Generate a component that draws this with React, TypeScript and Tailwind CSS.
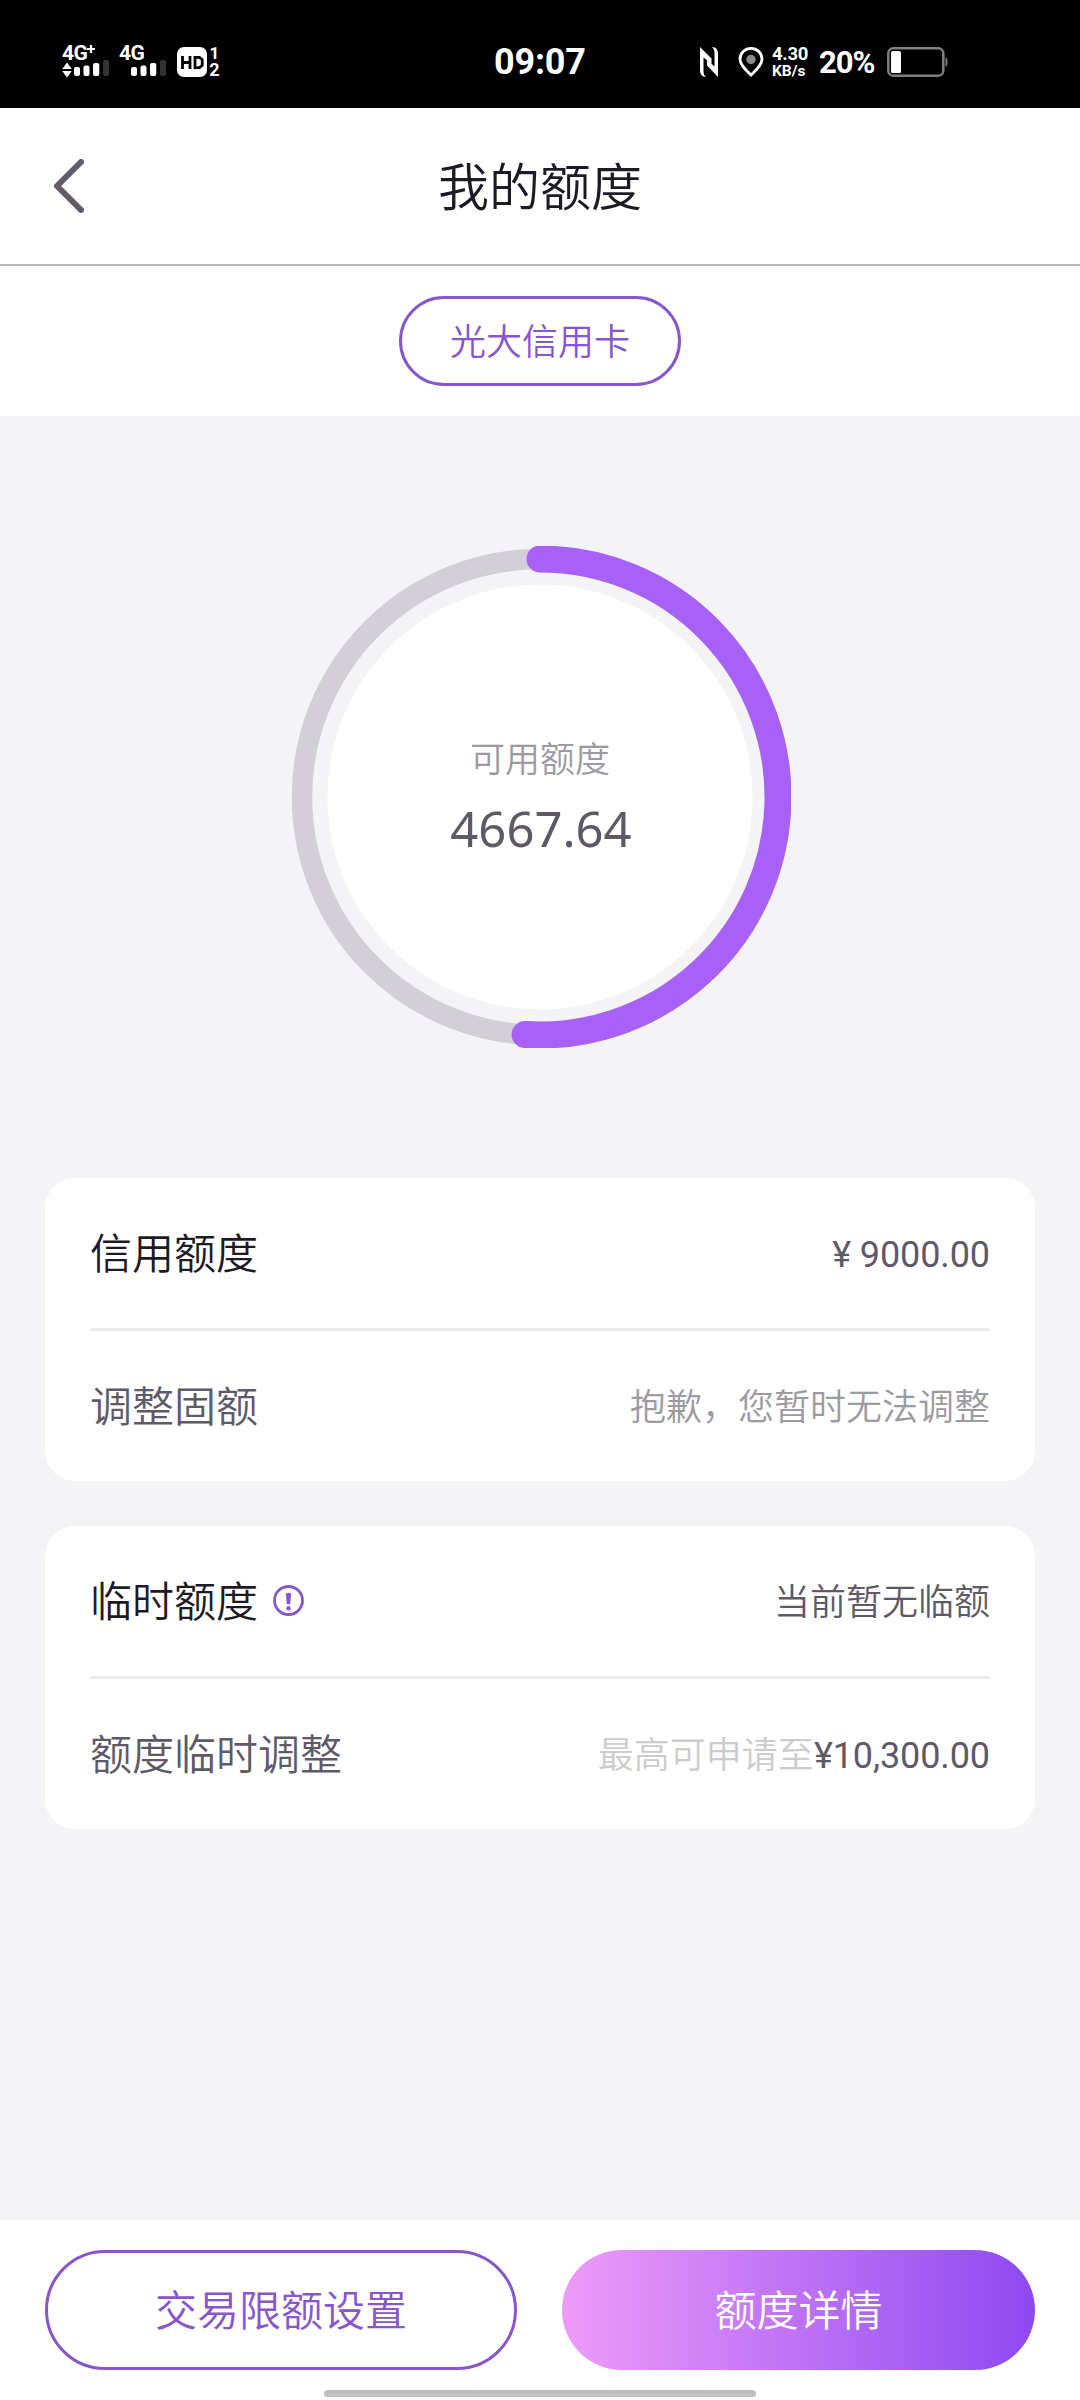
import React from 'react';

const RING = { size: 502, radius: 238, track: 20.5, stroke: 27, sweep: 183.6 };

function SignalBars() {
    return (
        <svg width="35" height="16" viewBox="0 0 35 16" fill="white" className="block">
            <rect x="0" y="7" width="6" height="9" rx="2" />
            <rect x="9.5" y="5.5" width="6" height="10.5" rx="2" />
            <rect x="19" y="3" width="6.3" height="13" rx="2" />
            <rect x="29" y="0" width="6" height="16" rx="2" fill="#333333" />
        </svg>
    );
}

function DataArrows() {
    return (
        <svg width="10" height="16" viewBox="0 0 10 16" fill="white" className="block">
            <path d="M5 0.5 L9.8 7 H0.2 Z" />
            <path d="M5 15.5 L9.8 9 H0.2 Z" />
        </svg>
    );
}

function StatusBar() {
    return (
        <div className="flex h-[108px] shrink-0 bg-black font-['Roboto',sans-serif] text-white">
            <div className="flex w-[494px] items-start pl-[62px] pt-[45px]">
                <div className="w-[57px]">
                    <div className="flex h-[15px] items-start text-[21px] leading-[16px] font-bold">
                        <span className="tracking-[-0.5px]">4G</span>
                        <svg width="8" height="8" viewBox="0 0 8 8" className="block" stroke="white" strokeWidth="2.2">
                            <path d="M4 0V8M0 4H8" />
                        </svg>
                    </div>
                    <div className="flex gap-[2px]">
                        <div className="pt-[2px]">
                            <DataArrows />
                        </div>
                        <SignalBars />
                    </div>
                </div>
                <div className="w-[58px]">
                    <div className="h-[15px] text-[21px] leading-[16px] font-bold tracking-[-0.5px]">4G</div>
                    <div className="pl-[12px]">
                        <SignalBars />
                    </div>
                </div>
                <div className="mt-[2px] flex h-[30px] w-[30px] items-center justify-center rounded-[7px] bg-white">
                    <svg width="23" height="13" viewBox="0 0 23 13" fill="none" stroke="black" strokeWidth="2.8">
                        <path d="M1.5 0V13M9 0V13M1.5 6.5H9M14 1.4H18.5L21.2 3.6V9.4L18.5 11.6H14Z" />
                    </svg>
                </div>
                <div className="mt-px ml-[2px] flex w-[11px] flex-col items-center text-[18px] leading-[14px] font-bold">
                    <span className="h-[17px] text-[17px]">1</span>
                    <span className="h-[14px]">2</span>
                </div>
            </div>
            <div className="w-[206px] pt-[44px] text-[36px] leading-[36px] font-bold tracking-[-0.2px]">09:07</div>
            <div className="flex items-start pt-[47px]">
                <svg width="18" height="30" viewBox="0 0 18 30" fill="white" className="block">
                    <path d="M0 0L11.5 11.5V17L3.5 10.5V25Q3.5 28 6 30Q0 30 0 23Z" />
                    <path d="M18 30L7 18.5V13L14.5 19.5V5Q14.5 2 12 0Q18 0 18 7Z" />
                </svg>
                <svg width="26" height="30" viewBox="0 0 26 30" fill="none" className="ml-[20px] block">
                    <path d="M13 28C8 23 2 18 2 12A11 10.6 0 0 1 24 12C24 18 18 23 13 28Z" stroke="white" strokeWidth="2.8" />
                    <circle cx="13" cy="12.5" r="4.7" fill="#8a8a8a" />
                </svg>
                <div className="ml-[8px] w-[47px] font-bold">
                    <div className="h-[17px] text-[18.5px] leading-[15px] tracking-[-0.3px]">4.30</div>
                    <div className="text-[15.5px] leading-[14px]">KB/s</div>
                </div>
                <div className="w-[68px] text-[31px] leading-[32px] font-bold tracking-[-1px]">20%</div>
                <svg width="61" height="30" viewBox="0 0 61 30" className="block">
                    <rect x="1.3" y="1.3" width="55" height="27.4" rx="5" fill="none" stroke="#808080" strokeWidth="2.5" />
                    <rect x="4" y="4" width="10" height="22" rx="1.5" fill="white" />
                    <path d="M58.5 10Q60.5 11 60.5 15Q60.5 19 58.5 20Z" fill="#808080" />
                </svg>
            </div>
        </div>
    );
}

function QuotaRing() {
    const center = RING.size / 2;
    const angle = (RING.sweep * Math.PI) / 180;
    const endX = center + RING.radius * Math.sin(angle);
    const endY = center - RING.radius * Math.cos(angle);

    return (
        <div className="relative mx-auto h-[502px] w-[502px]">
            <svg width={RING.size} height={RING.size} className="block overflow-hidden">
                <circle cx={center} cy={center} r={RING.radius} fill="none" stroke="#d2d0d6" strokeWidth={RING.track} />
                <circle cx={center} cy={center} r={212.5} fill="white" />
                <path
                    d={`M${center} ${center - RING.radius} A${RING.radius} ${RING.radius} 0 1 1 ${endX} ${endY}`}
                    fill="none"
                    stroke="#a761f6"
                    strokeWidth={RING.stroke}
                    strokeLinecap="round"
                />
            </svg>
            <div className="absolute inset-0 flex flex-col items-center pt-[188px]">
                <span className="font-['Noto_Sans_CJK_SC',sans-serif] text-[35px] leading-[46px] font-[350] text-[#9c9aa1]">可用额度</span>
                <span className="mt-[13px] pl-[2px] font-['Noto_Sans',sans-serif] text-[49px] leading-[70px] text-[#5f5967]">4667.64</span>
            </div>
        </div>
    );
}

function InfoIcon() {
    return (
        <svg width="31" height="31" viewBox="0 0 31 31" fill="none" className="block -translate-y-px">
            <circle cx="15.5" cy="15.5" r="14" stroke="#8855ce" strokeWidth="2.8" />
            <path d="M12.9 9.2Q12.9 7.7 15.5 7.7Q18.1 7.7 18.1 9.2L17.2 19.3H13.8Z" fill="#8855ce" />
            <circle cx="15.5" cy="23.3" r="2.2" fill="#8855ce" />
        </svg>
    );
}

function Row({ label, children }: { label: React.ReactNode; children: React.ReactNode }) {
    return (
        <div className="flex h-[150px] items-center justify-between">
            <div className="flex items-center gap-[15px] text-[42px] leading-[60px] font-[350]">{label}</div>
            <div className="pt-[3px] text-[36px] leading-[60px]">{children}</div>
        </div>
    );
}

export default function App() {
    return (
        <div
            lang="zh-CN"
            className="flex h-[2400px] w-[1080px] flex-col bg-[#f4f4f7] font-['Roboto','Noto_Sans_CJK_SC',sans-serif]"
        >
            <StatusBar />

            {/* Title bar */}
            <header className="flex h-[158px] shrink-0 items-center border-b-2 border-[#b9b9b9] bg-white">
                <div className="w-[200px] pl-[53px]">
                    <svg width="31" height="54" viewBox="0 0 31 54" fill="none" className="block">
                        <path d="M28 3L4 27L28 51" stroke="#625b69" strokeWidth="6" strokeLinecap="round" strokeLinejoin="round" />
                    </svg>
                </div>
                <h1 className="flex-1 pt-[6px] text-center text-[51px] leading-[72px] font-[350] text-[#1d1a26]">我的额度</h1>
                <div className="w-[200px]" />
            </header>

            {/* Card selector */}
            <div className="flex h-[150px] shrink-0 items-center justify-center bg-white">
                <button className="h-[90px] w-[282px] rounded-full border-3 border-[#8855ce] pt-[3px] text-[36px] leading-[60px] font-[350] text-[#8855ce]">
                    光大信用卡
                </button>
            </div>

            <main className="flex-1 px-[45px] pt-[130px]">
                <QuotaRing />

                <section className="mt-[130px] rounded-[30px] bg-white px-[45px]">
                    <Row label={<span className="pt-[3px] text-[#1d1a26]">信用额度</span>}>
                        <span className="tracking-[-0.1px] text-[#5f5967]">¥ 9000.00</span>
                    </Row>
                    <div className="h-[3px] bg-[#ececee]" />
                    <Row label={<span className="pt-[3px] text-[#5f5967]">调整固额</span>}>
                        <span className="font-[350] text-[#9c9aa1]">抱歉，您暂时无法调整</span>
                    </Row>
                </section>

                <section className="mt-[45px] rounded-[30px] bg-white px-[45px]">
                    <Row
                        label={
                            <>
                                <span className="pt-[3px] text-[#1d1a26]">临时额度</span>
                                <InfoIcon />
                            </>
                        }
                    >
                        <span className="font-[350] text-[#5f5967]">当前暂无临额</span>
                    </Row>
                    <div className="h-[3px] bg-[#ececee]" />
                    <Row label={<span className="pt-[3px] text-[#5f5967]">额度临时调整</span>}>
                        <span className="font-[350] text-[#cccccc]">最高可申请至</span>
                        <span className="tracking-[-0.1px] text-[#5f5967]">¥10,300.00</span>
                    </Row>
                </section>
            </main>

            {/* Bottom actions */}
            <footer className="h-[180px] shrink-0 bg-white px-[45px] pt-[30px]">
                <div className="grid grid-cols-[472px_473px] gap-[45px] text-[42px] leading-[60px]">
                    <button className="h-[120px] rounded-full border-3 border-[#8855ce] pt-[4px] font-[350] text-[#8855ce]">交易限额设置</button>
                    <button className="h-[120px] rounded-full bg-linear-to-r/srgb from-[#ee9bf9] to-[#8d49f1] pt-[4px] font-[350] text-white">
                        额度详情
                    </button>
                </div>
                <div className="mx-auto mt-[20px] h-[7px] w-[432px] rounded-full bg-[#c0c0c0]" />
            </footer>
        </div>
    );
}
